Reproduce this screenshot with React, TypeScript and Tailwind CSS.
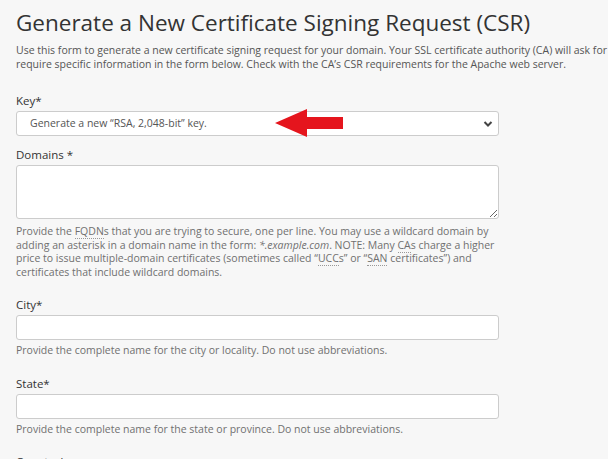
import React from 'react'

const font = { fontFamily: '"Open Sans", "Liberation Sans", sans-serif' }

function Abbr({ children }: { children: React.ReactNode }) {
  return (
    <abbr className="no-underline border-b border-dotted border-[#999]">{children}</abbr>
  )
}

function Label({ children }: { children: React.ReactNode }) {
  return <div className="text-[11.5px] leading-[16px] text-[#333] mb-[2px]">{children}</div>
}

function Help({ children }: { children: React.ReactNode }) {
  return (
    <div className="text-[10.5px] leading-[13.5px] text-[#707070] mt-[4px] w-[483px]">{children}</div>
  )
}

function Field({ label, help }: { label: string; help: React.ReactNode }) {
  return (
    <div className="mt-[18px]">
      <Label>{label}</Label>
      <input
        type="text"
        className="block w-[483px] h-[25px] bg-white border border-[#ccc] rounded-[3px]"
      />
      <Help>{help}</Help>
    </div>
  )
}

export default function App() {
  return (
    <div
      className="bg-[#f7f7f7] overflow-hidden pl-4 pt-[8px] w-[608px] h-[459px]"
      style={font}
    >
      <h1 className="text-[22.5px] leading-[30px] text-[#333] whitespace-nowrap">
        Generate a New Certificate Signing Request (CSR)
      </h1>
      <div className="text-[10.5px] leading-[13.5px] text-[#555] mt-[6px] whitespace-nowrap">
        <div>
          Use this form to generate a new certificate signing request for your domain. Your SSL certificate authority (CA) will ask for
        </div>
        <div>require specific information in the form below. Check with the CA’s CSR requirements for the Apache web server.</div>
      </div>

      <div className="mt-[22px]">
        <Label>Key*</Label>
        <div className="relative w-[483px] h-[25px] bg-white border border-[#ccc] rounded-[3px] flex items-center">
          <span className="text-[10.5px] text-[#555] pl-[13px]">Generate a new “RSA, 2,048-bit” key.</span>
          <svg
            className="absolute right-[5px] top-[8px]"
            width="10"
            height="8"
            viewBox="0 0 10 8"
          >
            <path d="M1.5 2 L5 5.5 L8.5 2" fill="none" stroke="#444" strokeWidth="2" />
          </svg>
          <svg
            className="absolute left-[258px] top-[-3px]"
            width="68"
            height="28"
            viewBox="0 0 68 28"
          >
            <polygon points="0,14 32,0 32,8 68,8 68,20 32,20 32,28" fill="#e5151d" />
          </svg>
        </div>
      </div>

      <div className="mt-[11px]">
        <Label>Domains *</Label>
        <textarea className="block w-[483px] h-[54px] bg-white border border-[#ccc] rounded-[3px] resize-y" />
        <div className="text-[10.5px] leading-[13.5px] text-[#707070] mt-[6px] w-[483px]">
          Provide the <Abbr>FQDN</Abbr>s that you are trying to secure, one per line. You may use a wildcard domain by
          adding an asterisk in a domain name in the form: <em>*.example.com</em>. NOTE: Many <Abbr>CA</Abbr>s charge a
          higher price to issue multiple-domain certificates (sometimes called “<Abbr>UCC</Abbr>s” or “<Abbr>SAN</Abbr>{' '}
          certificates”) and certificates that include wildcard domains.
        </div>
      </div>

      <Field label="City*" help="Provide the complete name for the city or locality. Do not use abbreviations." />
      <Field label="State*" help="Provide the complete name for the state or province. Do not use abbreviations." />
      <div className="mt-[18px]">
        <Label>Country*</Label>
      </div>
    </div>
  )
}
